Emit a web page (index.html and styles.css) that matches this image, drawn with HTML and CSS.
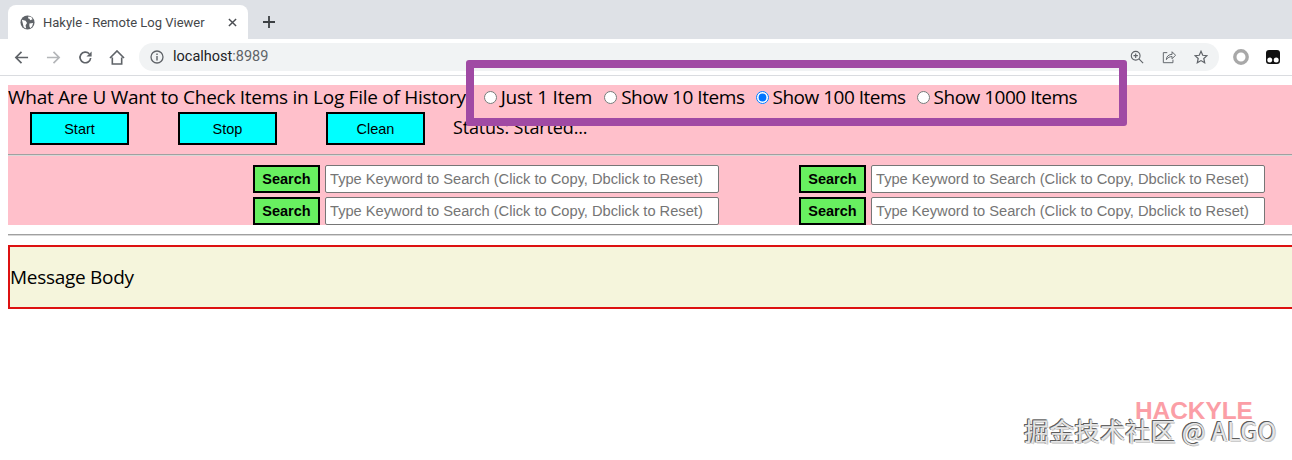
FILE: index.html
```html
<!DOCTYPE html>
<html lang="en">
<head>
<meta charset="utf-8">
<title>Hakyle - Remote Log Viewer</title>
<link rel="stylesheet" href="styles.css">
</head>
<body>
<header class="chrome">
  <div class="tabstrip">
    <div class="tab">
      <svg class="favicon" viewBox="0 0 16 16"><circle cx="8" cy="8" r="7.5" fill="#5f6368"/><path d="M2 5l4 1 1.500 2.500L6 11l.5 3.500L4 13 3 9zM9 1.500l3 .5 1.500 2.500-2.500 1-1-1.500-1.500-.5zM10 9l4-.5-1 3.500-2 2-1-2z" fill="#fff"/></svg>
      <span class="tab-title">Hakyle - Remote Log Viewer</span>
      <svg class="tab-close" viewBox="0 0 10 10"><path d="M1 1l8 8M9 1l-8 8" stroke="#4a4d52" stroke-width="1.600" fill="none"/></svg>
    </div>
    <svg class="new-tab" viewBox="0 0 12 12"><path d="M6 0v12M0 6h12" stroke="#3c4043" stroke-width="1.800" fill="none"/></svg>
  </div>
  <div class="toolbar">
    <svg class="nav nav-back" viewBox="0 0 16 16"><path d="M15 8H2M8 2 2 8l6 6" stroke="#5f6368" stroke-width="1.800" fill="none"/></svg>
    <svg class="nav nav-forward" viewBox="0 0 16 16"><path d="M1 8h13M8 2l6 6-6 6" stroke="#b4b6b9" stroke-width="1.800" fill="none"/></svg>
    <svg class="nav nav-reload" viewBox="0 0 16 16"><path d="M13.500 8.500A5.700 5.700 0 1 1 12 4" stroke="#5f6368" stroke-width="1.800" fill="none"/><path d="M14.500 1.500v5.500H9z" fill="#5f6368"/></svg>
    <svg class="nav nav-home" viewBox="0 0 16 16"><path d="M3 8v7h10V8M.5 8.500 8 1l7.500 7.500" stroke="#5f6368" stroke-width="1.700" fill="none"/></svg>
    <div class="omnibox">
      <svg class="info" viewBox="0 0 14 14"><circle cx="7" cy="7" r="6" stroke="#5f6368" stroke-width="1.300" fill="none"/><path d="M7 6v4.500M7 3.500v1.500" stroke="#5f6368" stroke-width="1.400"/></svg>
      <span class="url">localhost<span class="port">:8989</span></span>
      <span class="omni-icons">
        <svg class="omni-icon" viewBox="0 0 16 16"><circle cx="6.500" cy="6.500" r="5" stroke="#5f6368" stroke-width="1.300" fill="none"/><path d="M10.200 10.200 15 15M6.500 4v5M4 6.500h5" stroke="#5f6368" stroke-width="1.300" fill="none"/></svg>
        <svg class="omni-icon" viewBox="0 0 16 16"><path d="M6 3H1.500v11.500h11V11M5 11c0-4 3-6 6.500-6V2l4 4-4 4V7.500C9 7.500 6.500 8.500 5 11z" stroke="#5f6368" stroke-width="1.100" fill="none"/></svg>
        <svg class="omni-icon" viewBox="0 0 16 16"><path d="m8 1.500 2 4.500 4.800.5-3.600 3.200 1 4.800L8 12.100l-4.200 2.400 1-4.800L1.200 6.500 6 6z" stroke="#5f6368" stroke-width="1.400" fill="none"/></svg>
      </span>
    </div>
    <svg class="ext ext-ring" viewBox="0 0 16 16"><circle cx="8" cy="8" r="6.200" stroke="#a8a8a8" stroke-width="3.400" fill="none"/></svg>
    <svg class="ext ext-tampermonkey" viewBox="0 0 16 16"><rect x="1" y="1" width="14" height="14" rx="3" fill="#111"/><circle cx="4.800" cy="11" r="2.500" fill="#fff"/><circle cx="11.200" cy="11" r="2.500" fill="#fff"/></svg>
  </div>
</header>

<main class="page">
  <section class="controls">
    <div class="items-row">
      <span class="items-label">What Are U Want to Check Items in Log File of History</span>
      <label class="item-option opt-one"><input type="radio" name="items" class="item-radio">Just 1 Item</label>
      <label class="item-option opt-ten"><input type="radio" name="items" class="item-radio">Show 10 Items</label>
      <label class="item-option"><input type="radio" name="items" class="item-radio" checked>Show 100 Items</label>
      <label class="item-option"><input type="radio" name="items" class="item-radio">Show 1000 Items</label>
    </div>
    <div class="actions-row">
      <button class="action-btn">Start</button>
      <button class="action-btn">Stop</button>
      <button class="action-btn">Clean</button>
      <span class="status">Status: Started...</span>
    </div>
    <hr class="rule rule-inner">
    <div class="search-grid">
      <div class="search-cell"><button class="search-btn">Search</button><input class="search-input" placeholder="Type Keyword to Search (Click to Copy, Dbclick to Reset)"></div>
      <div class="search-cell"><button class="search-btn">Search</button><input class="search-input" placeholder="Type Keyword to Search (Click to Copy, Dbclick to Reset)"></div>
      <div class="search-cell"><button class="search-btn">Search</button><input class="search-input" placeholder="Type Keyword to Search (Click to Copy, Dbclick to Reset)"></div>
      <div class="search-cell"><button class="search-btn">Search</button><input class="search-input" placeholder="Type Keyword to Search (Click to Copy, Dbclick to Reset)"></div>
    </div>
  </section>
  <hr class="rule rule-outer">
  <div class="message">Message Body</div>
</main>

<div class="highlight"></div>
<div class="mark-hackyle">HACKYLE</div>
<div class="mark-juejin">掘金技术社区 @ ALGO</div>
</body>
</html>
```
FILE: styles.css
```css
* { box-sizing: border-box; }
html, body { margin: 0; height: 100%; }
body {
  width: 1292px;
  height: 460px;
  overflow: hidden;
  position: relative;
  background: #fff;
  font-family: "Open Sans", "Noto Sans", sans-serif;
  color: #000;
}

/* Browser frame */
.chrome { height: 76px; border-bottom: 1px solid #dadce0; }
.tabstrip {
  height: 39px;
  background: #dee1e6;
  display: flex;
  align-items: flex-end;
  padding-left: 8px;
}
.tab {
  width: 240px;
  height: 34px;
  background: #fff;
  border-radius: 8px 8px 0 0;
  display: flex;
  align-items: center;
  padding: 0 11px 0 12px;
}
.favicon { width: 15px; height: 15px; flex: none; }
.tab-title {
  margin-left: 8px;
  font: 13px "Roboto", "Liberation Sans", sans-serif;
  color: #45474a;
  white-space: nowrap;
  flex: 1;
}
.tab-close { width: 9px; height: 9px; flex: none; }
.new-tab { width: 12px; height: 12px; margin: 0 0 11px 15px; flex: none; }
.toolbar {
  height: 36px;
  display: flex;
  align-items: center;
  padding-left: 14px;
}
.nav { width: 15px; height: 15px; flex: none; margin-right: 17px; }
.nav-home { width: 16px; margin-right: 14px; margin-left: -1px; }
.omnibox {
  width: 1080px;
  height: 28px;
  margin-top: -1px;
  background: #f1f3f4;
  border-radius: 14px;
  display: flex;
  align-items: center;
  padding-left: 11px;
}
.info { width: 14px; height: 14px; flex: none; }
.url { margin-left: 9px; font: 14.500px "Roboto", "Liberation Sans", sans-serif; color: #202124; }
.port { color: #5f6368; }
.omni-icons { margin-left: auto; margin-right: 11px; display: flex; gap: 18px; }
.omni-icon { width: 14px; height: 14px; }
.ext { width: 16px; height: 16px; flex: none; margin-left: 14px; }
.ext-tampermonkey { margin-left: 16px; }

/* Page */
.page { padding: 9px 0 0 8px; }
.controls { background: #ffc0cb; height: 140px; }
.items-row {
  height: 24px;
  font-size: 19px;
  line-height: 24px;
  display: flex;
  align-items: center;
  white-space: nowrap;
}
.items-label { letter-spacing: -0.27px; }
.item-option { display: inline-flex; align-items: center; letter-spacing: -0.5px; }
.item-radio { width: 13px; height: 13px; margin: 0 4px 0 11px; accent-color: #0075ff; }
.opt-one { letter-spacing: -0.2px; }
.opt-one .item-radio { margin-left: 18px; }
.opt-ten { letter-spacing: -0.45px; }
.opt-ten .item-radio { margin-left: 12px; }
.actions-row {
  height: 33px;
  margin-top: 3px;
  display: flex;
  align-items: center;
  padding-left: 22px;
  gap: 49px;
}
.action-btn {
  width: 99px;
  height: 33px;
  padding: 0;
  background: #0ff;
  border: 2px solid #000;
  font: 14.500px "Liberation Sans", sans-serif;
  color: #000;
}
.status { margin-left: -21px; font-size: 18px; letter-spacing: -0.15px; line-height: 24px; margin-top: -3px; }
.rule { border: 0; height: 1px; margin: 0; background: #a0a0a0; box-shadow: 0 1px 0 #d8d8d8; }
.rule-inner { margin-top: 9px; }
.search-grid {
  margin-top: 10px;
  padding-left: 245px;
  display: grid;
  grid-template-columns: 546px 546px;
  grid-auto-rows: 28px;
  row-gap: 4px;
}
.search-cell { display: flex; gap: 5px; }
.search-btn {
  width: 67px;
  height: 28px;
  padding: 0;
  background: #68f060;
  border: 2px solid #000;
  font: bold 14.500px "Liberation Sans", sans-serif;
  color: #000;
}
.search-input {
  width: 394px;
  height: 28px;
  padding: 1px 4px;
  border: 1px solid #767676;
  border-radius: 2px;
  background: #fff;
  font: 14.670px "Liberation Sans", sans-serif;
}
.search-input::placeholder { color: #757575; opacity: 1; }
.rule-outer { margin-top: 9px; }
.message {
  margin-top: 10px;
  width: 1300px;
  height: 64px;
  border: 2px solid #dd1111;
  background: #f5f5dc;
  font-size: 19px;
  letter-spacing: -0.28px;
  line-height: 60px;
}

/* Overlays */
.highlight {
  position: absolute;
  left: 466px;
  top: 60px;
  width: 661px;
  height: 66px;
  border: 8px solid #a04aa4;
  border-radius: 3px;
}
.mark-hackyle {
  position: absolute;
  left: 1135px;
  top: 401px;
  font: bold 24.400px/20px "Liberation Sans", sans-serif;
  color: #fb9ea6;
}
.mark-juejin {
  position: absolute;
  left: 1024px;
  top: 419px;
  font: 25px/22px "Noto Sans CJK SC", "Noto Sans", sans-serif;
  letter-spacing: 0.3px;
  color: #e6e6e6;
  white-space: nowrap;
  text-shadow: -1px -1px 0 #5c5c5c, 0 -1px 0 #777, -1px 0 0 #777, 1px 1px 0 #ccc;
}
```
